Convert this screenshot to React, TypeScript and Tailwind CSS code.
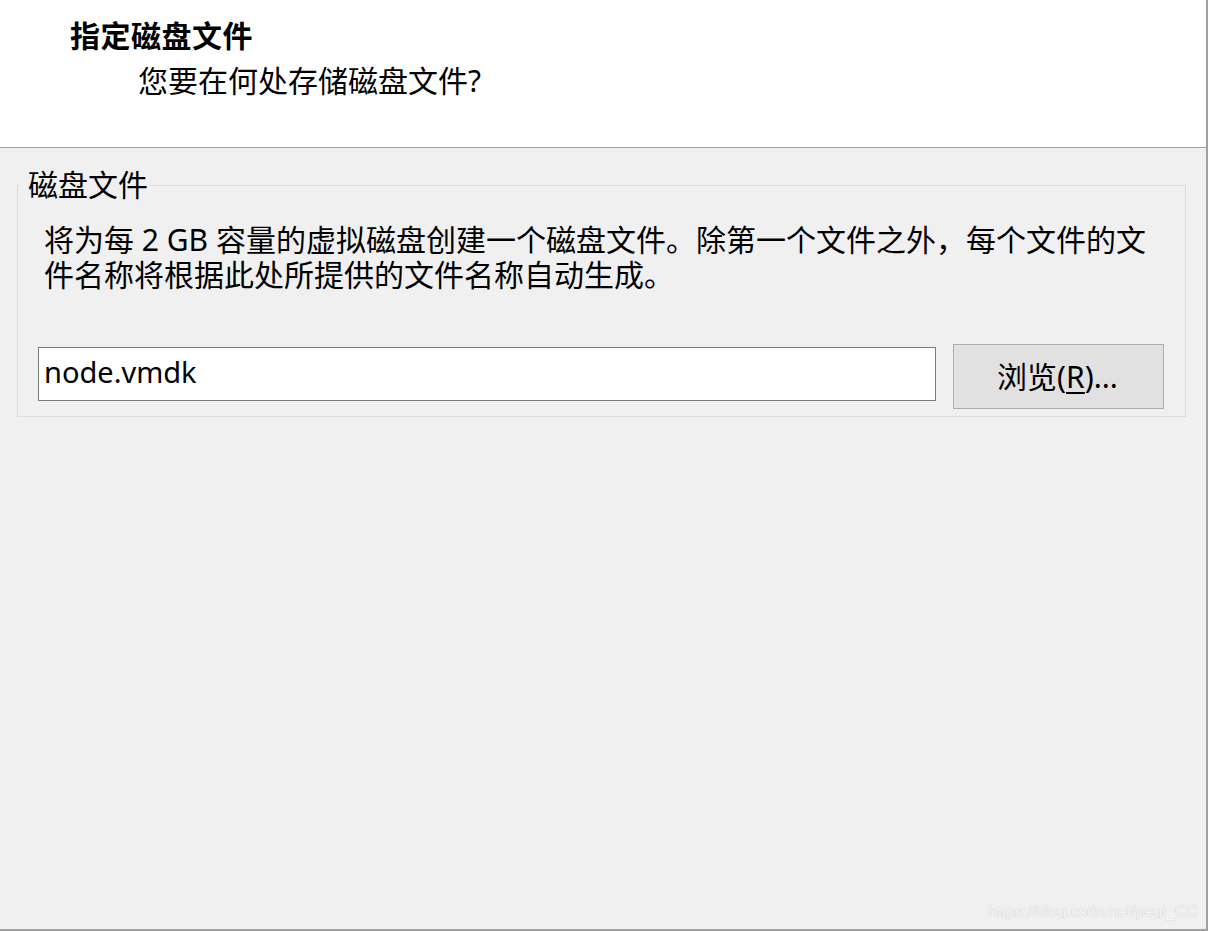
export default function App() {
  return (
    <div className="relative w-[1208px] h-[931px] bg-[#f0f0f0] border-r-2 border-b-2 border-[#a0a0a0] font-['Noto_Sans','Noto_Sans_CJK_SC',sans-serif] text-black overflow-hidden">
      {/* header */}
      <div className="h-[148px] bg-white border-b border-[#a0a0a0] pt-[13px]">
        <div className="pl-[70px] text-[30px] leading-[45px] font-bold tracking-[0.5px]">指定磁盘文件</div>
        <div className="pl-[138px] text-[30px] leading-[45px]">您要在何处存储磁盘文件?</div>
      </div>

      {/* group box */}
      <fieldset className="mt-[22px] ml-[17px] mr-[20px] border border-[#dcdcdc] pb-[7px]">
        <legend className="ml-[2px] pl-[8px] pr-[2px] text-[30px] leading-[30px]">磁盘文件</legend>
        <p className="pt-[22px] pl-[26px] text-[30px] leading-[35px]">
          将为每 2 GB 容量的虚拟磁盘创建一个磁盘文件。除第一个文件之外，每个文件的文
          <br />
          件名称将根据此处所提供的文件名称自动生成。
        </p>
        <div className="mt-[52px] pl-[20px] flex items-start gap-[17px]">
          <input
            readOnly
            value="node.vmdk"
            className="mt-[3px] w-[898px] h-[54px] bg-white border border-[#7a7a7a] px-[5px] pb-[6px] text-[29px] font-['Noto_Sans',sans-serif] outline-none"
          />
          <button
            type="button"
            className="w-[211px] h-[65px] bg-[#e1e1e1] border border-[#adadad] text-[30px] leading-[30px] pr-[2px]"
          >
            浏览(<span className="underline underline-offset-[4px] decoration-[2px]">R</span>)...
          </button>
        </div>
      </fieldset>

      {/* watermark */}
      <div className="absolute right-[8px] bottom-[7px] text-[16px] leading-[20px] font-['Liberation_Sans',sans-serif] text-[#f6f6f6] [text-shadow:0_0_1px_#b4b4b4]">
        https://blog.csdn.net/pegi_CC
      </div>
    </div>
  );
}
